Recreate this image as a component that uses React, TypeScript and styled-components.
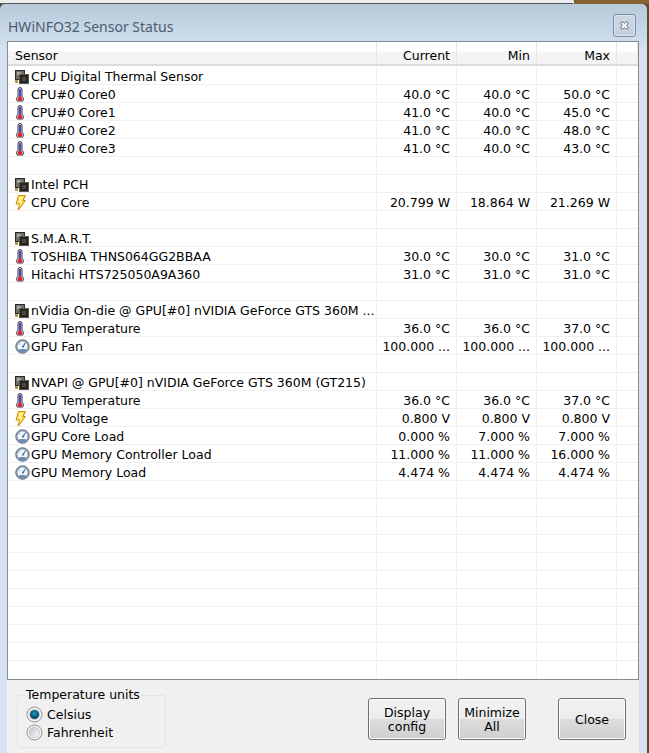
import styled, { createGlobalStyle } from 'styled-components'
import { FC } from 'react'

type Kind = 'group' | 'temp' | 'power' | 'gauge'

interface Reading {
  kind: Kind
  name: string
  current?: string
  min?: string
  max?: string
}

const readings: (Reading | null)[] = [
  { kind: 'group', name: 'CPU Digital Thermal Sensor' },
  { kind: 'temp', name: 'CPU#0 Core0', current: '40.0 °C', min: '40.0 °C', max: '50.0 °C' },
  { kind: 'temp', name: 'CPU#0 Core1', current: '41.0 °C', min: '40.0 °C', max: '45.0 °C' },
  { kind: 'temp', name: 'CPU#0 Core2', current: '41.0 °C', min: '40.0 °C', max: '48.0 °C' },
  { kind: 'temp', name: 'CPU#0 Core3', current: '41.0 °C', min: '40.0 °C', max: '43.0 °C' },
  null,
  { kind: 'group', name: 'Intel PCH' },
  { kind: 'power', name: 'CPU Core', current: '20.799 W', min: '18.864 W', max: '21.269 W' },
  null,
  { kind: 'group', name: 'S.M.A.R.T.' },
  { kind: 'temp', name: 'TOSHIBA THNS064GG2BBAA', current: '30.0 °C', min: '30.0 °C', max: '31.0 °C' },
  { kind: 'temp', name: 'Hitachi HTS725050A9A360', current: '31.0 °C', min: '31.0 °C', max: '31.0 °C' },
  null,
  { kind: 'group', name: 'nVidia On-die @ GPU[#0] nVIDIA GeForce GTS 360M ...' },
  { kind: 'temp', name: 'GPU Temperature', current: '36.0 °C', min: '36.0 °C', max: '37.0 °C' },
  { kind: 'gauge', name: 'GPU Fan', current: '100.000 ...', min: '100.000 ...', max: '100.000 ...' },
  null,
  { kind: 'group', name: 'NVAPI @ GPU[#0] nVIDIA GeForce GTS 360M (GT215)' },
  { kind: 'temp', name: 'GPU Temperature', current: '36.0 °C', min: '36.0 °C', max: '37.0 °C' },
  { kind: 'power', name: 'GPU Voltage', current: '0.800 V', min: '0.800 V', max: '0.800 V' },
  { kind: 'gauge', name: 'GPU Core Load', current: '0.000 %', min: '7.000 %', max: '7.000 %' },
  { kind: 'gauge', name: 'GPU Memory Controller Load', current: '11.000 %', min: '11.000 %', max: '16.000 %' },
  { kind: 'gauge', name: 'GPU Memory Load', current: '4.474 %', min: '4.474 %', max: '4.474 %' },
]

const TOTAL_ROWS = 34
const rows = [...readings, ...Array<null>(TOTAL_ROWS - readings.length).fill(null)]

const GlobalStyle = createGlobalStyle`
  html, body {
    margin: 0;
    padding: 0;
    height: 753px;
    overflow: hidden;
    background: #5c4a2c;
  }
  body {
    font-family: "DejaVu Sans", Verdana, sans-serif;
    font-size: 12.5px;
    color: #000;
  }
`

const Page = styled.div`
  width: 649px;
  height: 753px;
  display: flex;
  flex-direction: column;
`

const Backdrop = styled.div`
  height: 4px;
  display: flex;
  flex: none;
`

const BackdropLeft = styled.div`
  flex: 1;
  background: #eceded;
  border-bottom: 1px solid #555;
`

const BackdropRight = styled.div`
  width: 75px;
  background: #86622f;
  border-left: 1px solid #c4d4e4;
`

const Window = styled.div`
  flex: 1;
  min-height: 0;
  margin-right: 2px;
  display: flex;
  flex-direction: column;
  border-radius: 5px 5px 0 0;
  background: linear-gradient(180deg, #b8c9da 0, #c6d6e6 24px, #d6e3f2 50px, #d6e3f2 100%);
`

const TitleBar = styled.div`
  height: 37px;
  flex: none;
  display: flex;
  align-items: flex-start;
  justify-content: space-between;
  padding: 10px 11px 0 8px;
  box-sizing: border-box;
`

const Title = styled.div`
  font-family: "Noto Sans", "DejaVu Sans", sans-serif;
  font-size: 14px;
  line-height: 26px;
  color: #4a5c6e;
`

const CloseBox = styled.div`
  width: 23px;
  height: 23px;
  box-sizing: border-box;
  border: 1px solid #7f8fa2;
  border-radius: 3px;
  background: linear-gradient(180deg, #ccd7e3, #c2cfde);
  box-shadow: inset 0 0 0 1px #dbe4ee;
  display: flex;
  align-items: center;
  justify-content: center;
`

const Content = styled.div`
  flex: 1;
  min-height: 0;
  margin: 0 8px 0 7px;
  display: flex;
  flex-direction: column;
  background: #f0f0f0;
`

const Panel = styled.div`
  height: 639px;
  flex: none;
  box-sizing: border-box;
  border: 1px solid #878c91;
  background: #fff;
  overflow: hidden;
`

const Columns = styled.div`
  display: grid;
  grid-template-columns: 369px 80px 80px 80px 1fr;
`

const Header = styled(Columns)`
  height: 24px;
  box-sizing: border-box;
  border-bottom: 2px solid #dcdcdc;
  margin-bottom: 1px;
  background: linear-gradient(180deg, #fff 0, #fff 9px, #f5f5f6 10px, #f3f3f4 100%);
`

const HeaderCell = styled.div<{ $right?: boolean }>`
  border-right: 1px solid #e6e6e6;
  line-height: 27px;
  height: 22px;
  padding: ${(props) => (props.$right ? '0 6px 0 0' : '0 0 0 7px')};
  text-align: ${(props) => (props.$right ? 'right' : 'left')};
`

const Row = styled(Columns)`
  height: 18px;
  box-sizing: border-box;
  border-bottom: 1px solid #f0f0f0;
  &:last-child {
    border-bottom: none;
  }
`

const NameCell = styled.div`
  display: flex;
  align-items: center;
  padding: 2px 0 0 7px;
  box-sizing: border-box;
  border-right: 1px solid #f0f0f0;
  white-space: nowrap;
  overflow: hidden;
`

const IconSlot = styled.span`
  width: 16px;
  height: 15px;
  flex: none;
  display: flex;
  align-items: center;
`

const ValueCell = styled.div`
  border-right: 1px solid #f0f0f0;
  text-align: right;
  padding: 0 6px 0 0;
  line-height: 19px;
  white-space: nowrap;
  overflow: hidden;
`

const Footer = styled.div`
  flex: 1;
  display: flex;
  align-items: flex-start;
  padding: 0 13px 0 10px;
`

const UnitsGroup = styled.fieldset`
  width: 149px;
  height: 61px;
  margin: 7px 0 0;
  padding: 2px 0 0 8px;
  box-sizing: border-box;
  border: 1px solid #dde5ee;
  border-radius: 3px;
`

const UnitsLegend = styled.legend`
  margin-left: -1px;
  padding: 0 1px;
  line-height: 16px;
`

const RadioRow = styled.label`
  height: 18px;
  display: flex;
  align-items: center;
  gap: 4px;
`

const Buttons = styled.div`
  margin: 18px 0 0 auto;
  display: flex;
  gap: 12px;
`

const Button = styled.div<{ $width: number; $push?: number }>`
  width: ${(props) => props.$width}px;
  height: 42px;
  margin-left: ${(props) => props.$push ?? 0}px;
  padding-top: 1px;
  box-sizing: border-box;
  border: 1px solid #707070;
  border-radius: 3px;
  box-shadow: inset 0 0 0 1px #fbfbfb;
  background: linear-gradient(180deg, #f3f3f3 0, #ebebeb 50%, #dddddd 50%, #cfcfcf 100%);
  display: flex;
  align-items: center;
  justify-content: center;
  text-align: center;
  line-height: 14px;
`

const Thermometer: FC = () => (
  <svg width="10" height="16" viewBox="0 0 10 16">
    <path d="M3 2.500a2 2 0 0 1 4 0V9.200a3.400 3.400 0 1 1-4 0z" fill="#cfd0dc" stroke="#3d3a48" />
    <rect x="4" y="2" width="2" height="8" fill="#4c48c4" />
    <circle cx="5" cy="12" r="2.200" fill="#e0202a" />
    <rect x="4.300" y="9" width="1.400" height="2" fill="#e0202a" />
  </svg>
)

const Bolt: FC = () => (
  <svg width="11" height="16" viewBox="0 0 11 16">
    <path d="M3.500.5h7L8 5.500h2.500L3 15.500l1.500-6.500H1z" fill="#ffdb30" stroke="#cf8420" strokeLinejoin="round" />
    <path d="M4.500 1.800h3.500L6 6.500h2L4.600 11l.8-3.200H2.800z" fill="#fff3a0" />
  </svg>
)

const Gauge: FC = () => (
  <svg width="15" height="15" viewBox="0 0 15 15">
    <circle cx="7.500" cy="7.500" r="6.800" fill="#8a9bb0" stroke="#6d7d90" />
    <circle cx="7.500" cy="7.500" r="5" fill="#f4f7fa" />
    <path d="M3 11.500a6 6 0 0 0 9 0l-2-1.500H5z" fill="#6f8db0" />
    <path d="M7 8l3.500-4.500L8.200 8.500z" fill="#2f5f9a" stroke="#2f5f9a" strokeWidth=".5" />
    <circle cx="4.500" cy="5" r=".8" fill="#9fb4cc" />
  </svg>
)

const Chip: FC = () => (
  <svg width="14" height="14" viewBox="0 0 14 14">
    <rect x="0.500" y="0.500" width="9" height="9" fill="#6f6f6a" stroke="#2c2c2a" />
    <rect x="2" y="2" width="4" height="3" fill="#a8a8a0" />
    <rect x="4.500" y="4.500" width="9" height="9" fill="#23231f" stroke="#5b5b52" />
    <rect x="7" y="7" width="4" height="4" fill="#4a4a40" />
    <rect x="0" y="10" width="3" height="3" fill="#b59a3a" />
  </svg>
)

const icons: Record<Kind, FC> = { group: Chip, temp: Thermometer, power: Bolt, gauge: Gauge }

const Radio: FC<{ checked?: boolean }> = ({ checked }) => (
  <svg width="17" height="17" viewBox="0 0 17 17">
    <defs>
      <radialGradient id="radioOn" cx="50%" cy="40%" r="60%">
        <stop offset="0" stopColor="#1f9ccb" />
        <stop offset="1" stopColor="#032f48" />
      </radialGradient>
      <linearGradient id="radioOff" x1="0" y1="0" x2="1" y2="1">
        <stop offset="0" stopColor="#c2c2c2" />
        <stop offset="1" stopColor="#fafafa" />
      </linearGradient>
    </defs>
    <circle cx="8.500" cy="8.500" r="7.500" fill="#f4f4f4" stroke="#8e8f8f" />
    <circle cx="8.500" cy="8.500" r="5.200" fill={checked ? '#fff' : 'url(#radioOff)'} stroke="#b4b4b4" strokeWidth=".6" />
    {checked && <circle cx="8.500" cy="8.500" r="4.600" fill="url(#radioOn)" />}
  </svg>
)

const CloseGlyph: FC = () => (
  <svg width="9" height="9" viewBox="0 0 9 9">
    <path d="M1 1.500l.5-.5h1.500L4.500 2.500 6 1h1.500l.5.500V3L6.500 4.500 8 6v1.500l-.5.500H6L4.500 6.500 3 8H1.500L1 7.500V6l1.500-1.500L1 3z" fill="#f6f8fa" stroke="#4c5560" strokeWidth=".8" />
  </svg>
)

const App: FC = () => (
  <Page>
    <GlobalStyle />
    <Backdrop>
      <BackdropLeft />
      <BackdropRight />
    </Backdrop>
    <Window>
      <TitleBar>
        <Title>HWiNFO32 Sensor Status</Title>
        <CloseBox>
          <CloseGlyph />
        </CloseBox>
      </TitleBar>
      <Content>
        <Panel>
          <Header>
            <HeaderCell>Sensor</HeaderCell>
            <HeaderCell $right>Current</HeaderCell>
            <HeaderCell $right>Min</HeaderCell>
            <HeaderCell $right>Max</HeaderCell>
            <HeaderCell />
          </Header>
          {rows.map((reading, index) => {
            const Icon = reading ? icons[reading.kind] : null
            return (
              <Row key={index}>
                <NameCell>
                  {Icon && (
                    <IconSlot>
                      <Icon />
                    </IconSlot>
                  )}
                  {reading?.name}
                </NameCell>
                <ValueCell>{reading?.current}</ValueCell>
                <ValueCell>{reading?.min}</ValueCell>
                <ValueCell>{reading?.max}</ValueCell>
                <div />
              </Row>
            )
          })}
        </Panel>
        <Footer>
          <UnitsGroup>
            <UnitsLegend>Temperature units</UnitsLegend>
            <RadioRow>
              <Radio checked />
              Celsius
            </RadioRow>
            <RadioRow>
              <Radio />
              Fahrenheit
            </RadioRow>
          </UnitsGroup>
          <Buttons>
            <Button $width={78}>
              Display
              <br />
              config
            </Button>
            <Button $width={68}>
              Minimize
              <br />
              All
            </Button>
            <Button $width={68} $push={20}>
              Close
            </Button>
          </Buttons>
        </Footer>
      </Content>
    </Window>
  </Page>
)

export default App
